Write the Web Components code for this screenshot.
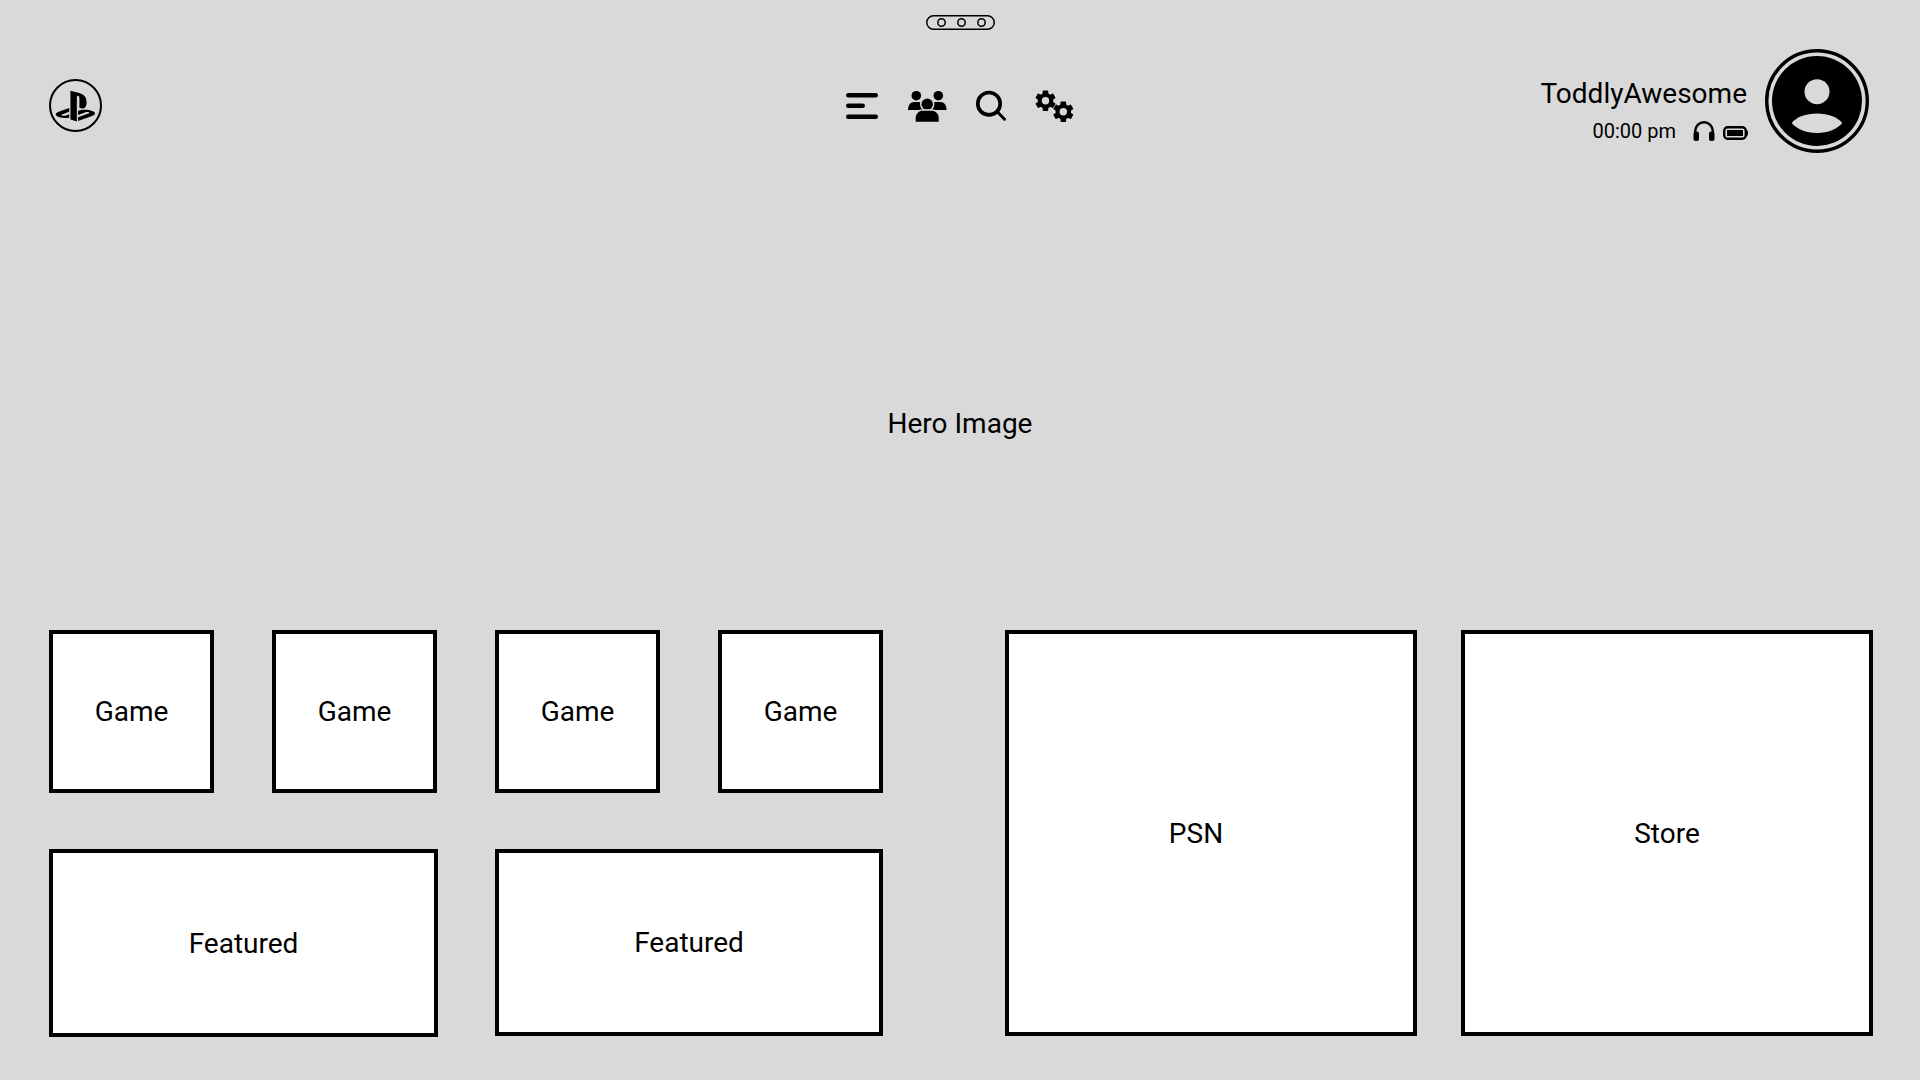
<!DOCTYPE html>
<html>
<head>
<meta charset="utf-8">
<style>
html,body{margin:0;padding:0;background:#d9d9d9;}
</style>
</head>
<body>
<ps-home></ps-home>

<template id="tile-tpl">
<style>
:host{
    display:flex;
    justify-content:center;
    align-items:center;
    box-sizing:border-box;
    background:#fff;
    border:4px solid #000;
    font-size:28px;
    color:#000;
}
</style>
<slot></slot>
</template>

<template id="topbar-tpl">
<style>
:host{
    display:grid;
    grid-template-columns:1fr auto 1fr;
    align-items:start;
    height:104px;
    padding:0 49px;
}
#logo{margin-top:30px;width:53px;height:53px;display:block;}
nav{display:flex;align-items:center;margin-top:41px;height:32px;}
nav svg{display:block;}
#user{display:flex;justify-content:flex-end;padding-right:2px;}
</style>
<svg id="logo" viewBox="0 0 53 53">
  <circle cx="26.5" cy="26.5" r="25.5" fill="none" stroke="#000" stroke-width="2"/>
  <path transform="translate(6.7 7.4) scale(1.64)" fill="#000" d="M8.984 2.596v17.547l3.915 1.261V6.688c0-.69.304-1.151.794-.991.636.18.76.814.76 1.505v5.875c2.441 1.193 4.362-.002 4.362-3.152 0-3.237-1.126-4.675-4.438-5.827-1.307-.448-3.728-1.186-5.39-1.502zm4.656 16.241l6.296-2.275c.715-.258.826-.625.246-.818-.586-.192-1.637-.139-2.357.123l-4.205 1.5V14.98l.24-.085s1.201-.42 2.913-.615c1.696-.18 3.785.03 5.437.661 1.848.601 2.04 1.472 1.576 2.072-.465.6-1.622 1.036-1.622 1.036l-8.544 3.107V18.86zM1.807 18.6c-1.9-.545-2.214-1.668-1.352-2.32.801-.586 2.16-1.052 2.16-1.052l5.615-2.013v2.313L4.205 17c-.705.271-.825.632-.239.826.586.195 1.637.15 2.343-.12L8.247 17v2.074c-.12.03-.256.044-.39.073-1.939.331-3.996.196-6.038-.479z"/>
</svg>
<nav>
  <svg width="32" height="26" viewBox="0 0 32 26">
    <g stroke="#000" stroke-width="4.6" stroke-linecap="round">
      <line x1="2.3" y1="2.3" x2="29.7" y2="2.3"/>
      <line x1="2.3" y1="12.7" x2="16.7" y2="12.7"/>
      <line x1="2.3" y1="23.7" x2="29.7" y2="23.7"/>
    </g>
  </svg>
  <svg width="39" height="32" viewBox="0 0 39 32" style="margin-left:30px">
    <circle cx="8.3" cy="5.7" r="4.8"/>
    <circle cx="30.3" cy="5.7" r="4.8"/>
    <path d="M0 20c0-5 2.500-8 6-8h5c2 0 4 1 5 3v5z"/>
    <path d="M38.600 20c0-5-2.500-8-6-8h-5c-2 0-4 1-5 3v5z"/>
    <circle cx="19.200" cy="14.300" r="5.700" stroke="#d9d9d9" stroke-width="3" paint-order="stroke"/>
    <path d="M7.700 31.700v-3.700c0-4.600 3.500-7.300 7-7.300h9c3.500 0 7 2.700 7 7.300v3.700z" stroke="#d9d9d9" stroke-width="3" paint-order="stroke"/>
  </svg>
  <svg width="32" height="32" viewBox="0 0 32 32" style="margin-left:28px">
    <circle cx="14" cy="13.700" r="11.200" fill="none" stroke="#000" stroke-width="3.700"/>
    <line x1="22.500" y1="22" x2="29.500" y2="29.200" stroke="#000" stroke-width="3" stroke-linecap="round"/>
  </svg>
  <svg width="39" height="32" viewBox="0 0 39 32" style="margin-left:28px">
    <defs>
      <g id="cog">
        <circle r="7.800"/>
        <rect x="-2.800" y="-10.200" width="5.600" height="5" rx="1"/>
        <rect x="-2.800" y="-10.200" width="5.600" height="5" rx="1" transform="rotate(60)"/>
        <rect x="-2.800" y="-10.200" width="5.600" height="5" rx="1" transform="rotate(120)"/>
        <rect x="-2.800" y="-10.200" width="5.600" height="5" rx="1" transform="rotate(180)"/>
        <rect x="-2.800" y="-10.200" width="5.600" height="5" rx="1" transform="rotate(240)"/>
        <rect x="-2.800" y="-10.200" width="5.600" height="5" rx="1" transform="rotate(300)"/>
        <circle r="3.700" fill="#d9d9d9"/>
      </g>
    </defs>
    <use href="#cog" x="10.500" y="10.700"/>
    <use href="#cog" x="28.300" y="21.800"/>
  </svg>
</nav>
<div id="user"><slot></slot></div>
</template>

<template id="user-tpl">
<style>
:host{display:flex;align-items:flex-start;}
#info{display:flex;flex-direction:column;align-items:flex-end;margin-top:28px;margin-right:18px;}
#name{font-size:28px;line-height:33px;}
#status{display:flex;align-items:center;font-size:20px;line-height:24px;margin-top:9px;margin-right:-1px;}
#status svg{display:block;}
#avatar{width:104px;height:104px;display:block;}
</style>
<div id="info">
  <div id="name"><slot name="name"></slot></div>
  <div id="status">
    <span><slot name="time"></slot></span>
    <svg width="22" height="20" viewBox="0 0 22 20" style="margin-left:17px">
      <path d="M2.200 13V10a8.800 8.800 0 0 1 17.600 0V13" fill="none" stroke="#000" stroke-width="2.400"/>
      <rect x="0.500" y="10.500" width="5.500" height="9.500" rx="2"/>
      <rect x="16" y="10.500" width="5.500" height="9.500" rx="2"/>
    </svg>
    <svg width="25" height="14" viewBox="0 0 25 14" style="margin-left:8px;margin-top:4px">
      <rect x="1.200" y="1.200" width="21.600" height="11.600" rx="3.500" fill="none" stroke="#000" stroke-width="2.400"/>
      <rect x="4" y="4" width="16" height="6" fill="#000"/>
      <rect x="23" y="4.500" width="2" height="5" rx="1"/>
    </svg>
  </div>
</div>
<svg id="avatar" viewBox="0 0 104 104">
  <circle cx="52" cy="52" r="50.300" fill="none" stroke="#000" stroke-width="3.400"/>
  <circle cx="52" cy="52" r="45"/>
  <circle cx="52" cy="42.700" r="12.500" fill="#d9d9d9"/>
  <path fill="#d9d9d9" d="M26.700 74c5-6 14-9.500 25.300-9.500S72 68 77.300 74c-5 6-14 10-25.300 10S31.700 80 26.700 74z"/>
</svg>
</template>

<template id="home-tpl">
<style>
:host{
    display:flex;
    flex-direction:column;
    width:1920px;
    height:1080px;
    background:#d9d9d9;
    font-family:Roboto,"Liberation Sans",sans-serif;
    color:#000;
    overflow:hidden;
}
#pill-row{display:flex;justify-content:center;padding-top:15px;height:34px;}
#pill{display:block;width:69px;height:15px;}
#hero{display:flex;justify-content:center;align-items:center;font-size:28px;padding-top:63px;box-sizing:border-box;height:477px;}
#tiles{display:flex;padding:0 47px 0 49px;}
#left{display:grid;grid-template-columns:repeat(4,165px);grid-template-rows:163px 188px;column-gap:58px;row-gap:56px;}
.wide{grid-column:span 2;}
#feat-a{width:389px;}
#feat-b{width:388px;height:187px;}
#right{display:flex;gap:44px;margin-left:122px;}
.big{width:412px;height:406px;}
#psn{padding-right:30px;}
</style>
<div id="pill-row">
  <svg id="pill" viewBox="0 0 69 15">
    <rect x="0.750" y="0.750" width="67.500" height="13.500" rx="6.750" fill="none" stroke="#000" stroke-width="1.500"/>
    <g fill="none" stroke="#000" stroke-width="1.500">
      <circle cx="15.500" cy="7.500" r="3.700"/>
      <circle cx="35.500" cy="7.500" r="3.700"/>
      <circle cx="55.500" cy="7.500" r="3.700"/>
    </g>
  </svg>
</div>
<top-bar>
  <user-badge>
    <span slot="name">ToddlyAwesome</span>
    <span slot="time">00:00 pm</span>
  </user-badge>
</top-bar>
<div id="hero">Hero Image</div>
<div id="tiles">
  <div id="left">
    <home-tile>Game</home-tile>
    <home-tile>Game</home-tile>
    <home-tile>Game</home-tile>
    <home-tile>Game</home-tile>
    <home-tile class="wide" id="feat-a">Featured</home-tile>
    <home-tile class="wide" id="feat-b">Featured</home-tile>
  </div>
  <div id="right">
    <home-tile class="big" id="psn">PSN</home-tile>
    <home-tile class="big">Store</home-tile>
  </div>
</div>
</template>

<script>
function stamp(el,id){
    el.attachShadow({mode:"open"});
    el.shadowRoot.appendChild(document.getElementById(id).content.cloneNode(true));
}
class HomeTile extends HTMLElement{
    constructor(){super();stamp(this,'tile-tpl');}
}
class UserBadge extends HTMLElement{
    constructor(){super();stamp(this,'user-tpl');}
}
class TopBar extends HTMLElement{
    constructor(){super();stamp(this,'topbar-tpl');}
}
class PsHome extends HTMLElement{
    constructor(){super();stamp(this,'home-tpl');}
}
customElements.define('home-tile',HomeTile);
customElements.define('user-badge',UserBadge);
customElements.define('top-bar',TopBar);
customElements.define('ps-home',PsHome);
</script>
</body>
</html>
